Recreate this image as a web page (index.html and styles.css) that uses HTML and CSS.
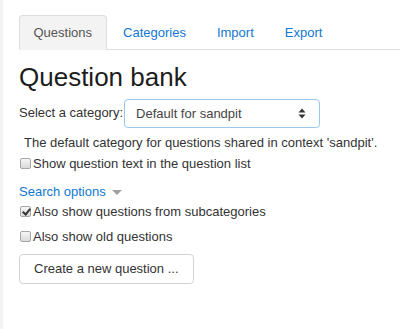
FILE: index.html
```html
<!DOCTYPE html>
<html lang="en">
<head>
  <meta charset="UTF-8">
  <title>Question bank</title>
  <link rel="stylesheet" href="styles.css">
</head>
<body>
  <div class="page">

    <ul class="tabs">
      <li><a href="#" class="active">Questions</a></li>
      <li><a href="#">Categories</a></li>
      <li><a href="#">Import</a></li>
      <li><a href="#">Export</a></li>
    </ul>

    <h2 class="title">Question bank</h2>

    <div class="choose">
      <label for="category">Select a category:</label>
      <span class="select_wrap">
        <select id="category" class="select">
          <option>Default for sandpit</option>
        </select>
        <svg class="select_arrow" width="8" height="11" viewBox="0 0 8 11">
          <path d="M4 0.5 L7.5 4.5 L0.5 4.5 Z M4 10.5 L7.5 6.5 L0.5 6.5 Z" fill="#333"/>
        </svg>
      </span>
    </div>

    <p class="info">The default category for questions shared in context 'sandpit'.</p>

    <label class="check row_show"><input type="checkbox">Show question text in the question list</label>

    <a href="#" class="search_link">Search options <span class="caret"></span></a>

    <label class="check row_sub"><input type="checkbox" checked>Also show questions from subcategories</label>
    <label class="check row_old"><input type="checkbox">Also show old questions</label>

    <button class="btn">Create a new question ...</button>

  </div>
</body>
</html>
```

FILE: styles.css
```css
body{
  margin: 0;
  padding: 0;
  font-family: "Liberation Sans", Arial, sans-serif;
  font-size: 13px;
  line-height: 19.5px;
  color: #333;
}
.page{
  min-height: 329px;
  box-sizing: border-box;
  border-left: 3px solid #f3f3f3;
  padding: 15px 0 0 16px;
}
.tabs{
  display: flex;
  list-style: none;
  margin: 0;
  padding: 0;
  border-bottom: 1px solid #dedede;
}
.tabs li{
  margin-bottom: -1px;
}
.tabs a{
  display: block;
  padding: 7px 13.5px;
  margin-right: 2px;
  border: 1px solid transparent;
  border-radius: 4px 4px 0 0;
  color: #1177d1;
  text-decoration: none;
  line-height: 19px;
}
.tabs a.active{
  color: #555;
  background: #f3f3f3;
  border-color: #dedede;
  border-bottom-color: #f3f3f3;
}
.title{
  margin: 12px 0 0;
  font-size: 26px;
  font-weight: normal;
  line-height: 1.2;
  color: #1d1d1d;
}
.choose{
  display: flex;
  align-items: center;
  margin-top: 5.5px;
}
.choose label{
  margin-right: 1px;
}
.select_wrap{
  position: relative;
  display: inline-block;
}
.select{
  appearance: none;
  -webkit-appearance: none;
  display: block;
  width: 196px;
  height: 29px;
  padding: 0 11px;
  border: 1px solid #98c8f0;
  border-radius: 4px;
  background: #fff;
  font-family: inherit;
  font-size: 13px;
  color: #444;
  outline: none;
}
.select_arrow{
  position: absolute;
  right: 14px;
  top: 9px;
}
.info{
  margin: 5px 0 0;
  padding-left: 5px;
}
.check{
  display: flex;
  align-items: center;
}
.check input{
  appearance: none;
  -webkit-appearance: none;
  position: relative;
  width: 11px;
  height: 11px;
  margin: 0 2px 0 1px;
  border: 1px solid #a6a6a6;
  border-radius: 2px;
  background: linear-gradient(#f6f6f6, #dadada);
  box-sizing: border-box;
}
.check input:checked::after{
  content: "";
  position: absolute;
  left: 3px;
  top: 0px;
  width: 3px;
  height: 6px;
  border: solid #333;
  border-width: 0 2px 2px 0;
  transform: rotate(40deg);
}
.row_show{
  margin-top: 1.5px;
}
.search_link{
  display: block;
  margin-top: 8.5px;
  color: #1177d1;
  text-decoration: none;
}
.caret{
  display: inline-block;
  margin-left: 3px;
  vertical-align: middle;
  border-top: 5px solid #a0a0a0;
  border-left: 5px solid transparent;
  border-right: 5px solid transparent;
}
.row_sub{
  margin-top: 0.5px;
}
.row_old{
  margin-top: 5.5px;
}
.btn{
  display: block;
  margin-top: 7.5px;
  height: 30px;
  padding: 0 14px;
  border: 1px solid #d3d3d3;
  border-radius: 4px;
  background: #fff;
  font-family: inherit;
  font-size: 13px;
  color: #333;
}
```
